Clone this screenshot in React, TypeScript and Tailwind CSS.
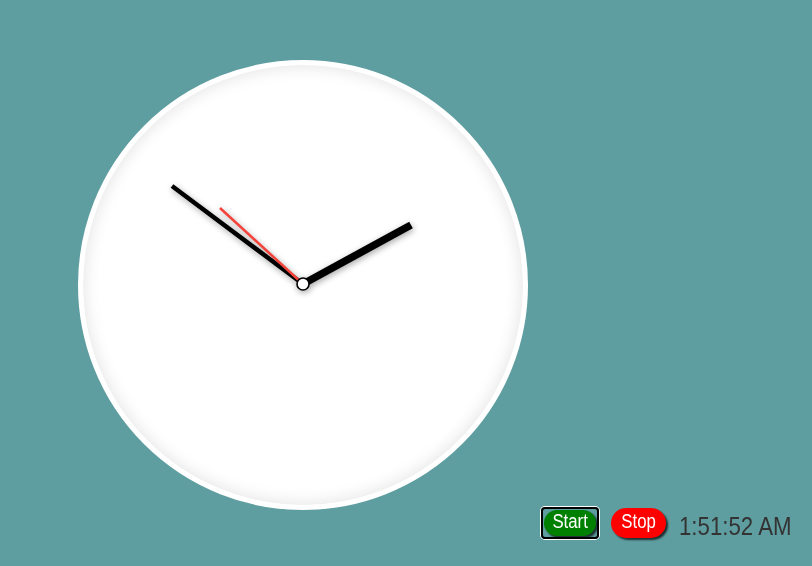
import React from 'react';

const Clock: React.FC = () => {
  return (
    <div className="w-[450px] h-[450px] shrink-0 rounded-full bg-white border-[5px] border-white shadow-[inset_0_0_16px_2px_rgba(0,0,0,0.1)]">
      <svg className="w-full h-full" viewBox="0 0 440 440">
        <g className="drop-shadow-[1px_2px_3px_rgba(0,0,0,0.35)]">
          <line x1="220" y1="219" x2="328" y2="160" stroke="#000" strokeWidth="7.5" />
          <line x1="220" y1="219" x2="89" y2="121" stroke="#000" strokeWidth="4.5" />
          <line x1="220" y1="219" x2="137" y2="143" stroke="#f4433a" strokeWidth="2.5" />
          <circle cx="220" cy="219" r="6" fill="#fff" stroke="#000" strokeWidth="1.6" />
        </g>
      </svg>
    </div>
  );
};

export default function App() {
  return (
    <div className="w-[812px] h-[566px] bg-[#5f9ea0] flex items-start pl-[78px] pt-[60px] font-['Liberation_Sans',Arial,sans-serif] overflow-hidden">
      <Clock />
      <div className="flex items-center mt-[446px] ml-[13px]">
        <span className="rounded-[4px] border-2 border-black ring-1 ring-white p-px flex">
          <button className="w-[52px] h-[26px] flex items-center justify-center pb-[3px] bg-[#008000] text-white text-[20px] leading-none rounded-full shadow-[2px_2px_2px_rgba(0,0,0,0.7)]">
            <span className="inline-block scale-x-[0.84]">Start</span>
          </button>
        </span>
        <button className="ml-[12px] w-[55px] h-[30px] flex items-center justify-center pb-[3px] bg-[#ff0000] text-white text-[20px] leading-none rounded-full shadow-[2px_2px_2px_rgba(0,0,0,0.7)]">
          <span className="inline-block scale-x-[0.84]">Stop</span>
        </button>
        <span className="self-start mt-[8px] ml-[13px] inline-block origin-left scale-x-[0.89] text-[25px] text-[#333] leading-none">1:51:52 AM</span>
      </div>
    </div>
  );
}
